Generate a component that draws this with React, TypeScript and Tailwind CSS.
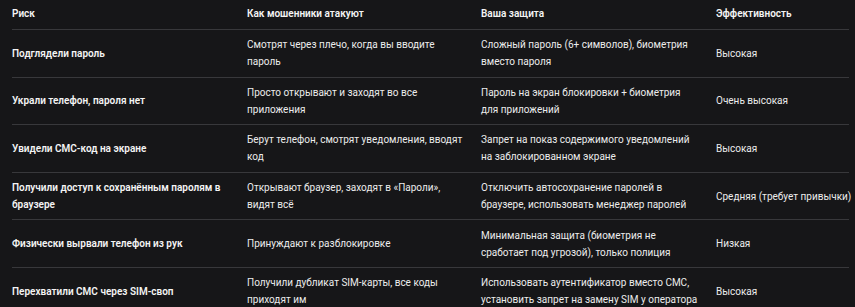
const rows = [
  {
    risk: "Подглядели пароль",
    attack: "Смотрят через плечо, когда вы вводите пароль",
    defense: "Сложный пароль (6+ символов), биометрия вместо пароля",
    level: "Высокая",
  },
  {
    risk: "Украли телефон, пароля нет",
    attack: "Просто открывают и заходят во все приложения",
    defense: "Пароль на экран блокировки + биометрия для приложений",
    level: "Очень высокая",
  },
  {
    risk: "Увидели СМС-код на экране",
    attack: "Берут телефон, смотрят уведомления, вводят код",
    defense: "Запрет на показ содержимого уведомлений на заблокированном экране",
    level: "Высокая",
  },
  {
    risk: "Получили доступ к сохранённым паролям в браузере",
    attack: "Открывают браузер, заходят в «Пароли», видят всё",
    defense: "Отключить автосохранение паролей в браузере, использовать менеджер паролей",
    level: "Средняя (требует привычки)",
  },
  {
    risk: "Физически вырвали телефон из рук",
    attack: "Принуждают к разблокировке",
    defense: "Минимальная защита (биометрия не сработает под угрозой), только полиция",
    level: "Низкая",
  },
  {
    risk: "Перехватили СМС через SIM-своп",
    attack: "Получили дубликат SIM-карты, все коды приходят им",
    defense: "Использовать аутентификатор вместо СМС, установить запрет на замену SIM у оператора",
    level: "Высокая",
  },
];

export default function App() {
  return (
    <div className="min-h-screen w-full bg-[#161618] px-3 text-[10px] leading-[17px] text-[#ececec] [font-family:Roboto,'Liberation_Sans',sans-serif]">
      <table className="w-[837px] table-fixed border-collapse">
        <colgroup>
          <col className="w-[235px]" />
          <col className="w-[234px]" />
          <col className="w-[235px]" />
          <col className="w-[133px]" />
        </colgroup>
        <thead>
          <tr className="border-b border-[#38383b] text-left font-semibold text-[#f4f4f4]">
            <th className="pt-[5px] pb-[7px] pr-4 font-semibold">Риск</th>
            <th className="pt-[5px] pb-[7px] pr-[15px] font-semibold">Как мошенники атакуют</th>
            <th className="pt-[5px] pb-[7px] pr-[17px] font-semibold">Ваша защита</th>
            <th className="pt-[5px] pb-[7px] font-semibold">Эффективность</th>
          </tr>
        </thead>
        <tbody>
          {rows.map((r, i) => (
            <tr key={i} className={i < rows.length - 1 ? "border-b border-[#38383b]" : ""}>
              <td className="py-[6.3px] pr-4 align-middle font-semibold text-[#f4f4f4]">{r.risk}</td>
              <td className="py-[6.3px] pr-[15px] align-middle">{r.attack}</td>
              <td className="py-[6.3px] pr-[17px] align-middle">{r.defense}</td>
              <td className="py-[6.3px] align-middle whitespace-nowrap">{r.level}</td>
            </tr>
          ))}
        </tbody>
      </table>
    </div>
  );
}
